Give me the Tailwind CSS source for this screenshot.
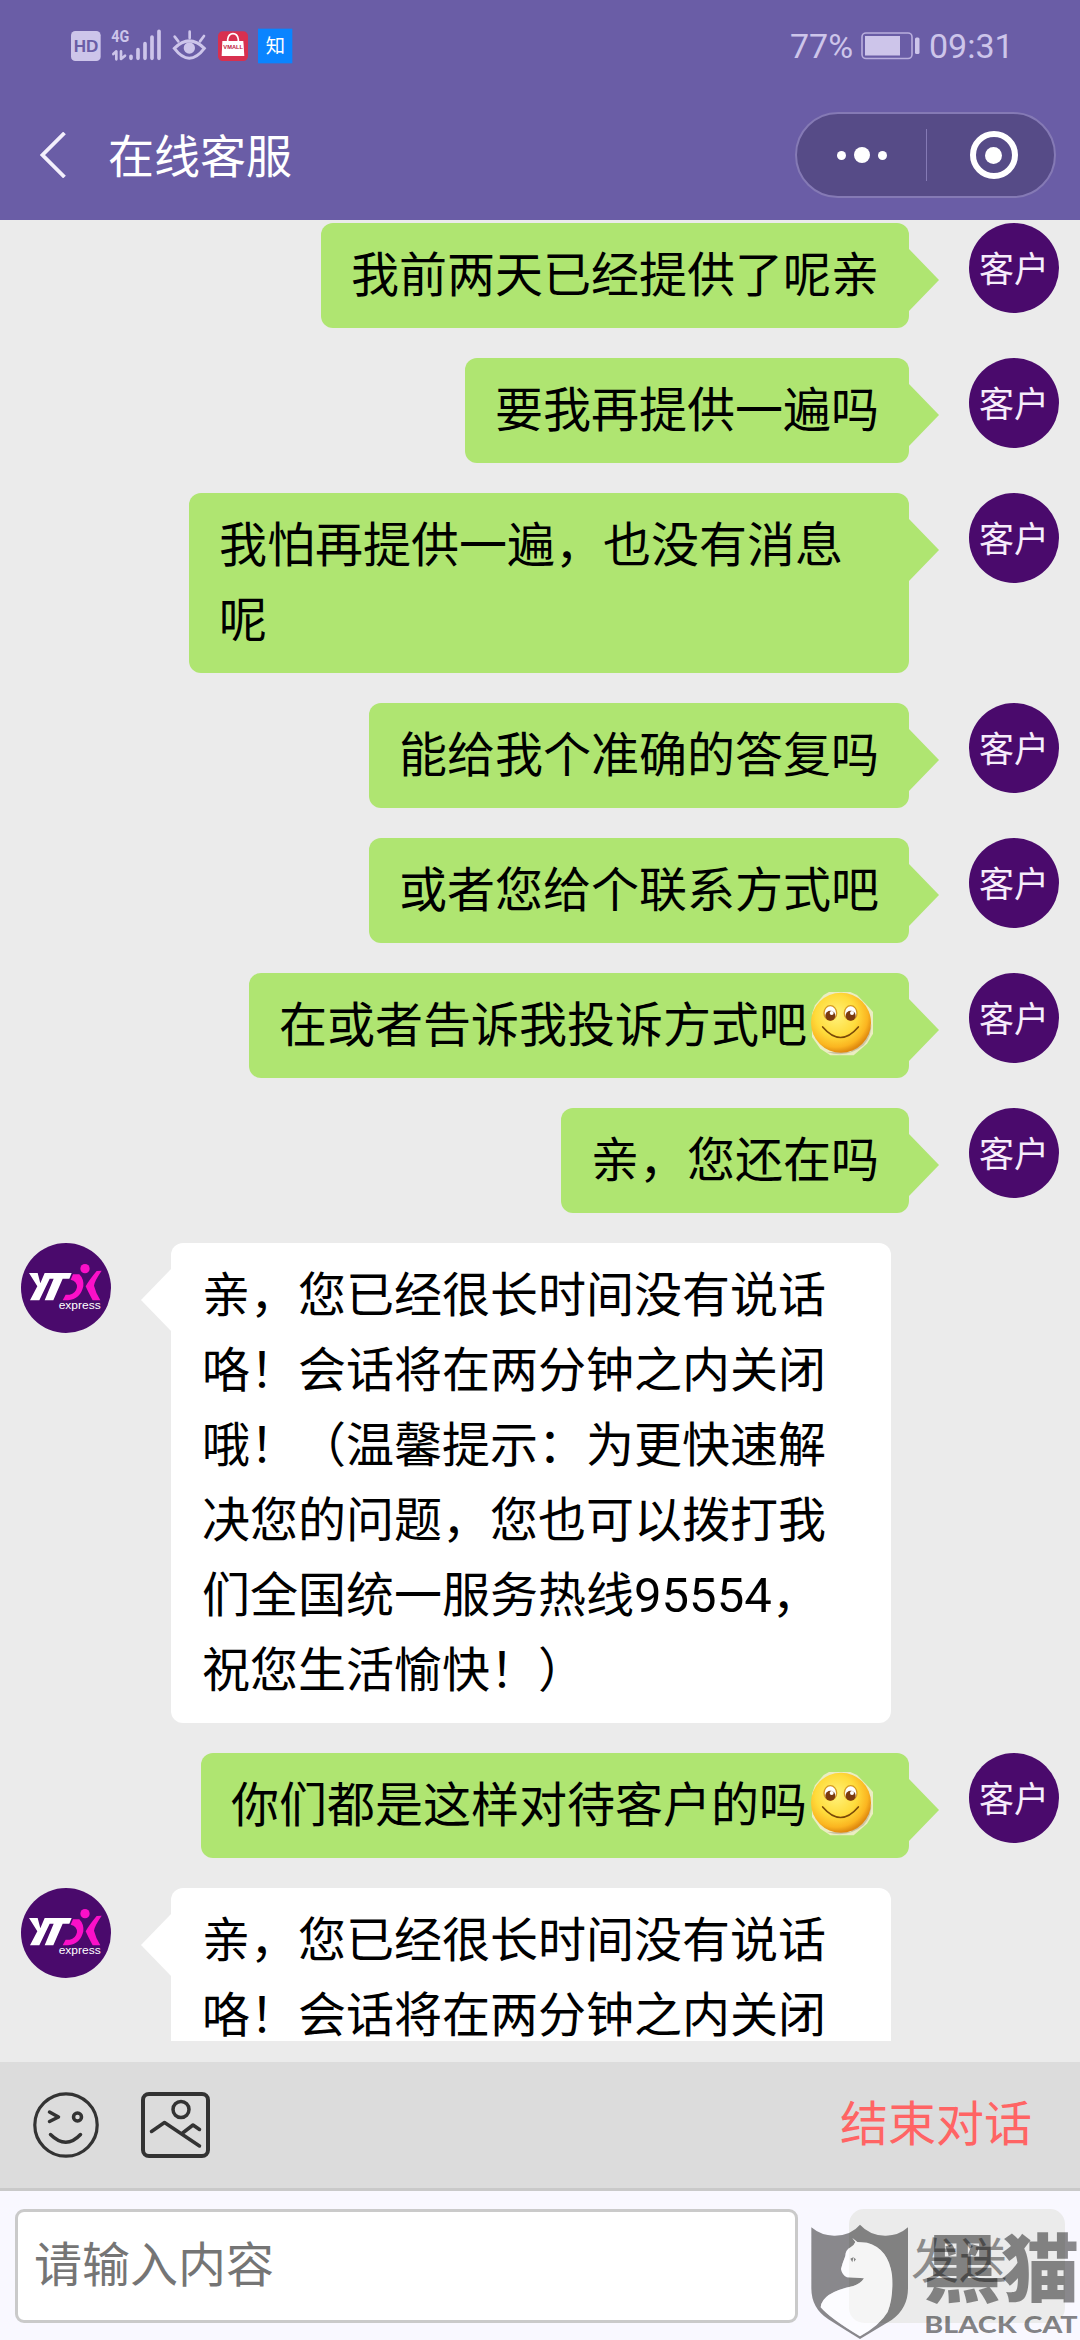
<!DOCTYPE html>
<html lang="zh-CN">
<head>
<meta charset="utf-8">
<title>在线客服</title>
<script src="https://cdn.jsdelivr.net/npm/@tailwindcss/browser@4"></script>
</head>
<body class="w-[1080px] h-[2340px] overflow-hidden flex flex-col bg-[#ebebeb] font-['Noto_Sans_CJK_SC',sans-serif] text-black">

<svg class="absolute size-0">
  <defs>
    <radialGradient id="face" cx="42%" cy="38%" r="62%">
      <stop offset="0" stop-color="#fff27a"/><stop offset=".55" stop-color="#ffdc3c"/><stop offset=".85" stop-color="#fbb520"/><stop offset="1" stop-color="#e08a10"/>
    </radialGradient>
    <symbol id="smile" viewBox="0 0 216 216">
      <path d="M50 24L66 15H130L150 24L185 60L198 75V140L180 170L140 205H70L40 185L15 150V80L24 55Z" fill="#f6efd0" opacity=".85"/>
      <path d="M60 195Q120 215 170 175Q195 145 193 110L180 150L130 195Z" fill="#b8a890" opacity=".6"/>
      <circle cx="102" cy="107" r="90" fill="url(#face)"/>
      <ellipse cx="70" cy="78" rx="19" ry="22" fill="#fff" stroke="#d99a20" stroke-width="4"/>
      <ellipse cx="131" cy="78" rx="19" ry="22" fill="#fff" stroke="#d99a20" stroke-width="4"/>
      <ellipse cx="70" cy="86" rx="15" ry="15" fill="#7a3a10"/>
      <ellipse cx="131" cy="86" rx="15" ry="15" fill="#7a3a10"/>
      <circle cx="74" cy="78" r="6" fill="#fff"/><circle cx="135" cy="78" r="6" fill="#fff"/>
      <path d="M47 120Q101 183 154 120" fill="none" stroke="#7a4a08" stroke-width="5" stroke-linecap="round"/>
    </symbol>
    <symbol id="yto" viewBox="9 9 270 270">
      <circle cx="144" cy="144" r="135" fill="#4a0a6c"/>
      <path fill="#fff" d="M33 99H59L67 130L80 99H161L154 116H134L106 181H80L107 116H95L64 181H36L58 139Z"/>
      <g fill="#fb10c8">
        <circle cx="201" cy="86" r="14"/>
        <path d="M165 103H184Q198 117 196 139Q187 178 150 181H134L143 164H155Q173 161 177 142Q178 124 158 119Z"/>
        <path d="M251 92Q228 126 228 137Q233 158 247 181H224Q209 153 203 139Q214 119 236 93Z"/>
      </g>
      <text x="122" y="208" font-family="Liberation Sans" font-size="32" textLength="126" lengthAdjust="spacingAndGlyphs" fill="#fff">express</text>
    </symbol>
  </defs>
</svg>

<header class="h-[220px] shrink-0 bg-[#6a5da6]">
  <div class="h-[92px] flex items-center justify-between pl-[71px] pr-[70px]">
    <svg class="w-[222px] h-[36px]" viewBox="63 54 666 108">
      <rect x="63" y="63" width="89" height="90" rx="13" fill="#cdc5ea"/>
      <text x="71" y="126" font-family="Liberation Sans, sans-serif" font-weight="700" font-size="51" textLength="74" lengthAdjust="spacingAndGlyphs" fill="#6a5da6">HD</text>
      <text x="184" y="97" font-family="Roboto, sans-serif" font-weight="700" font-size="52" textLength="54" lengthAdjust="spacingAndGlyphs" fill="#cdc5ea">4G</text>
      <g stroke="#cdc5ea" stroke-width="11" stroke-linecap="round" fill="none">
        <path d="M243 139V145M264 119V145M285 101V145M306 81V145M327 64V145"/>
        <path stroke-width="8" stroke-linejoin="round" d="M190 132L199 124V148M213 124V147L225 137"/>
      </g>
      <g stroke="#cdc5ea" fill="none" stroke-width="9" stroke-linecap="round">
        <path d="M373 115Q418 70 463 115Q418 174 373 115Z"/>
        <path d="M374 80L385 94M419 65V84M462 78L450 94" stroke-width="8"/>
        <circle cx="418" cy="114" r="17" fill="#cdc5ea" stroke="none"/>
      </g>
      <rect x="504" y="64" width="90" height="89" rx="14" fill="#d8304f"/>
      <path d="M517 93H580L583 138H515Z" fill="#fff"/>
      <path d="M533 99V88Q536 71 549 71Q562 71 565 88V99" fill="none" stroke="#fff" stroke-width="5"/>
      <text x="520" y="117" font-family="Liberation Sans, sans-serif" font-weight="700" font-size="17" textLength="59" lengthAdjust="spacingAndGlyphs" fill="#c02040">VMALL</text>
      <rect x="624" y="56" width="103" height="104" fill="#0a84ff"/>
      <text x="647" y="129" font-family="Noto Sans CJK SC, sans-serif" font-weight="400" font-size="58" fill="#fff">知</text>
    </svg>
    <div class="flex items-center font-[Roboto,sans-serif] text-[34px] leading-[42px] text-[#cdc5ea]">
      <span class="w-[71px] whitespace-nowrap">77%</span>
      <svg class="w-[59px] h-[28px]" viewBox="0 0 59 28">
        <rect x="1" y="1" width="50" height="25.500" rx="4" fill="none" stroke="#b9aedd" stroke-width="1.600"/>
        <rect x="4" y="4" width="35" height="19.500" fill="#cdc5ea"/>
        <rect x="54" y="5.500" width="4.500" height="16.500" rx="1.500" fill="#cdc5ea"/>
      </svg>
      <span class="pl-[9px] w-[90px] whitespace-nowrap">09:31</span>
    </div>
  </div>
  <div class="h-[126px] flex items-center justify-between pl-[40px] pr-[24px]">
    <div class="flex items-center">
      <svg class="w-[26px] h-[46px]" viewBox="0 0 26 46"><path d="M24.500 1L2.500 23L24.500 45" fill="none" stroke="#f3effc" stroke-width="3.800"/></svg>
      <h1 class="ml-[42px] -mt-[4px] text-[46px] leading-[70px] text-white">在线客服</h1>
    </div>
    <div class="w-[261px] h-[86px] rounded-full border-2 border-[#857ab5] bg-[#564b87] flex items-center">
      <div class="w-[129px] flex items-center justify-center gap-[8px]">
        <i class="size-[9px] rounded-full bg-white"></i><i class="size-[16px] rounded-full bg-white"></i><i class="size-[9px] rounded-full bg-white"></i>
      </div>
      <div class="w-px h-[52px] bg-[#857ab5]"></div>
      <div class="flex-1 flex justify-center pl-[6px]">
        <div class="size-[48px] rounded-full border-[6px] border-white flex items-center justify-center"><i class="size-[17px] rounded-full bg-white"></i></div>
      </div>
    </div>
  </div>
</header>

<main id="chat" class="h-[1821px] shrink-0 overflow-hidden flex flex-col gap-[30px] pt-[3px] text-[48px] leading-[75px]"></main>

<section class="mt-[21px] h-[129px] shrink-0 bg-[#dcdcdc] border-b-[3px] border-[#c9c9c9] flex items-center justify-between pl-[33px] pr-[48px]">
  <div class="flex items-center gap-[42px]">
    <svg class="w-[66px] h-[66px]" viewBox="0 0 66 66" fill="none" stroke="#333" stroke-width="3.500" stroke-linecap="round" stroke-linejoin="round">
      <circle cx="33" cy="33" r="31.200" stroke-width="3.200"/>
      <path d="M16.500 20L25.500 25L16.500 29.500"/><circle cx="44.500" cy="25" r="4"/>
      <path d="M17.500 42.500Q33 58 47.500 42.500"/>
    </svg>
    <svg class="w-[69px] h-[66px]" viewBox="0 0 69 66" fill="none" stroke="#333" stroke-width="3.500" stroke-linecap="round" stroke-linejoin="round">
      <rect x="2" y="2" width="65" height="62" rx="6" stroke-width="4"/>
      <circle cx="40" cy="17.500" r="8"/>
      <path d="M10.500 39.500L23.500 30.500L58.500 54M41 41.500L52 33L58.500 37.500"/>
    </svg>
  </div>
  <span class="-mt-[10px] text-[48px] leading-[70px] text-[#ff6464]">结束对话</span>
</section>

<footer class="relative flex-1 bg-[#f9f8ff] flex items-start justify-between pt-[18px] pl-[15px] pr-[15px]">
  <div class="w-[783px] h-[114px] rounded-[9px] border-[3px] border-[#cacaca] bg-white flex items-center pl-[16px] pb-[10px] text-[48px] leading-[70px] text-[#757575]">请输入内容</div>
  <div class="w-[216px] h-[114px] rounded-[15px] bg-[#ebebeb] flex items-center justify-center pb-[18px] pl-[4px] text-[48px] leading-[70px] text-[#8b8b8b]">发送</div>
  <svg class="absolute left-[805px] top-[29px] w-[275px] h-[120px]" viewBox="0 0 825 360">
    <path fill="#000" fill-opacity=".45" fill-rule="evenodd" d="M19 22Q50 48 90 47Q138 46 165 14Q194 46 240 47Q280 48 309 22V205Q309 265 260 300Q210 330 165 357Q120 330 70 298Q19 265 19 205ZM142 54L151 66Q148 75 137 82Q121 90 121 108Q112 130 108 147Q112 166 126 172Q155 173 177 175Q168 190 145 198Q50 218 47 262Q75 295 165 349Q225 315 248 276Q266 230 261 165Q250 85 186 68L157 66Z"/>
    <path fill="#fff" fill-opacity=".5" d="M142 54L151 66Q148 75 137 82Q121 90 121 108Q112 130 108 147Q112 166 126 172Q155 173 177 175Q168 190 145 198Q50 218 47 262Q75 295 165 349Q225 315 248 276Q266 230 261 165Q250 85 186 68L157 66Z"/>
    <path fill="#858585" d="M136 116L146 111L142 127ZM147 113L153 118L147 125Z"/>
    <text x="355" y="228" font-family="Noto Sans CJK SC, sans-serif" font-weight="900" font-size="222" textLength="468" lengthAdjust="spacingAndGlyphs" fill="#000" fill-opacity=".45">黑猫</text>
    <text x="358" y="338" font-family="Lato, sans-serif" font-weight="900" font-size="69" textLength="460" lengthAdjust="spacingAndGlyphs" fill="#000" fill-opacity=".48">BLACK CAT</text>
  </svg>
</footer>

<template id="user">
  <div class="flex items-start justify-end pr-[21px]">
    <div class="bubble max-w-[720px] rounded-[12px] bg-[#afe571] pt-[11px] pb-[19px] pl-[30px] pr-[30px]"></div>
    <svg class="w-[30px] h-[62px] mt-[26px] mr-[30px]" viewBox="0 0 30 62"><path d="M0 0L30 31L0 62Z" fill="#afe571"/></svg>
    <div class="size-[90px] rounded-full bg-[#4a0a6c] text-[#f6ecfb] text-[35px] leading-[88px] text-center whitespace-nowrap">客户</div>
  </div>
</template>
<template id="agent">
  <div class="flex items-start pl-[21px]">
    <svg class="size-[90px]"><use href="#yto"/></svg>
    <svg class="w-[30px] h-[62px] mt-[26px] ml-[30px]" viewBox="0 0 30 62"><path d="M30 0L0 31L30 62Z" fill="#fff"/></svg>
    <div class="bubble w-[720px] rounded-[12px] bg-white pt-[11px] pb-[19px] pl-[31px] whitespace-nowrap"></div>
  </div>
</template>
<template id="emoji"><svg class="inline-block size-[72px] -my-[10px] align-middle relative -top-[6px]"><use href="#smile"/></svg></template>

<script>
  const notice = '亲，您已经很长时间没有说话<br>咯！会话将在两分钟之内关闭<br>哦！（温馨提示：为更快速解<br>决您的问题，您也可以拨打我<br>们全国统一服务热线<span class="font-[Roboto] leading-none text-[49px]">95554</span>，<br>祝您生活愉快！）';
  const smile = document.getElementById('emoji').innerHTML;
  const messages = [
    ['user', '我前两天已经提供了呢亲'],
    ['user', '要我再提供一遍吗'],
    ['user', '<div class="w-[660px]">我怕再提供一遍，也没有消息<br>呢</div>'],
    ['user', '能给我个准确的答复吗'],
    ['user', '或者您给个联系方式吧'],
    ['user', '在或者告诉我投诉方式吧' + smile],
    ['user', '亲，您还在吗'],
    ['agent', notice],
    ['user', '你们都是这样对待客户的吗' + smile],
    ['agent', notice]
  ];
  const chat = document.getElementById('chat');
  for (const [who, html] of messages) {
    const row = document.getElementById(who).content.cloneNode(true);
    row.querySelector('.bubble').innerHTML = html;
    row.firstElementChild.classList.add('shrink-0');
    chat.append(row);
  }
</script>
</body>
</html>
